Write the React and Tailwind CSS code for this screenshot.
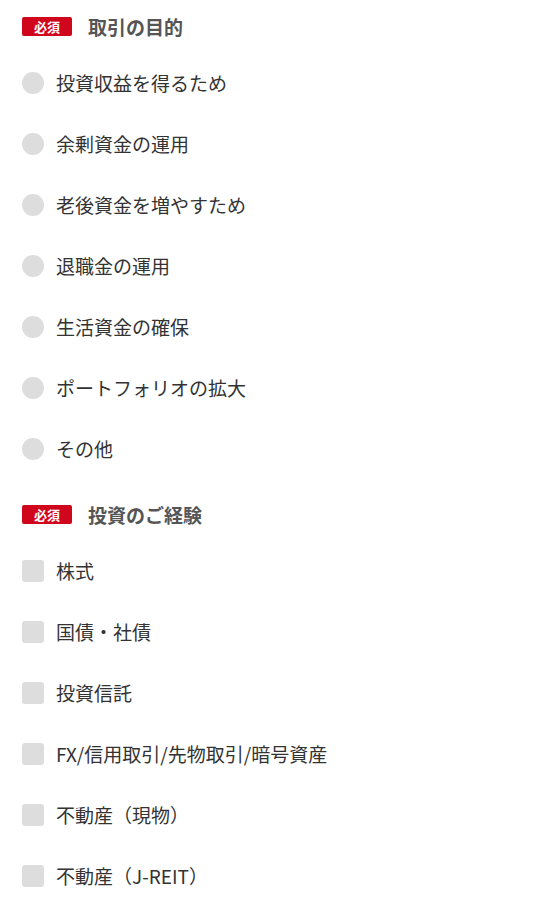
import React, { useState } from "react";

const purposes = [
  "投資収益を得るため",
  "余剰資金の運用",
  "老後資金を増やすため",
  "退職金の運用",
  "生活資金の確保",
  "ポートフォリオの拡大",
  "その他",
];

const experiences = [
  "株式",
  "国債・社債",
  "投資信託",
  "FX/信用取引/先物取引/暗号資産",
  "不動産（現物）",
  "不動産（J-REIT）",
];

function SectionTitle({ title }) {
  return (
    <div className="flex items-center gap-4 h-5">
      <span className="w-[50px] h-[19px] flex items-center justify-center bg-[#d0061c] text-white text-[13px] font-bold rounded-[2px] leading-none">
        必須
      </span>
      <h2 className="text-[19px] font-bold text-[#555555] leading-none">{title}</h2>
    </div>
  );
}

function App() {
  const [purpose, setPurpose] = useState(null);
  const [checked, setChecked] = useState([]);

  const toggle = (item) => {
    setChecked((prev) =>
      prev.includes(item) ? prev.filter((x) => x !== item) : [...prev, item]
    );
  };

  return (
    <div
      className="min-h-screen bg-white pl-[22px] pt-[16px]"
      style={{ fontFamily: '"Noto Sans CJK JP", "Noto Sans", sans-serif' }}
    >
      <SectionTitle title="取引の目的" />
      <div className="mt-[16px] flex flex-col">
        {purposes.map((p) => (
          <label key={p} className="h-[61px] flex items-center gap-3 cursor-pointer">
            <span
              onClick={() => setPurpose(p)}
              className={
                "w-[22px] h-[22px] rounded-full shrink-0 " +
                (purpose === p ? "bg-[#d0061c]" : "bg-[#dddddd]")
              }
            />
            <span className="text-[19px] text-[#333333] leading-none">{p}</span>
          </label>
        ))}
      </div>

      <div className="mt-[25px]">
        <SectionTitle title="投資のご経験" />
      </div>
      <div className="mt-[16px] flex flex-col">
        {experiences.map((e) => (
          <label key={e} className="h-[61px] flex items-center gap-3 cursor-pointer">
            <span
              onClick={() => toggle(e)}
              className={
                "w-[22px] h-[22px] rounded-[3px] shrink-0 " +
                (checked.includes(e) ? "bg-[#d0061c]" : "bg-[#dddddd]")
              }
            />
            <span className="text-[19px] text-[#333333] leading-none">{e}</span>
          </label>
        ))}
      </div>
    </div>
  );
}

export default App;
